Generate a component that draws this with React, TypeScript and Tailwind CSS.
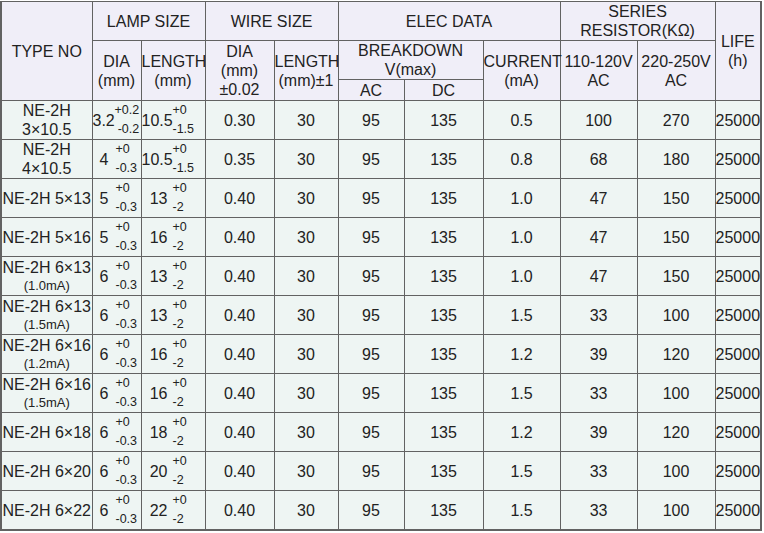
import React from 'react'

type Row = {
  name: string
  note?: string
  twoLine?: boolean
  dia: string
  diaTol: [string, string]
  len: string
  lenTol: [string, string]
  wire: string
  cur: string
  r1: string
  r2: string
}

const ROWS: Row[] = [
  { name: 'NE-2H', note: '3×10.5', twoLine: true, dia: '3.2', diaTol: ['+0.2', '-0.2'], len: '10.5', lenTol: ['+0', '-1.5'], wire: '0.30', cur: '0.5', r1: '100', r2: '270' },
  { name: 'NE-2H', note: '4×10.5', twoLine: true, dia: '4', diaTol: ['+0', '-0.3'], len: '10.5', lenTol: ['+0', '-1.5'], wire: '0.35', cur: '0.8', r1: '68', r2: '180' },
  { name: 'NE-2H 5×13', dia: '5', diaTol: ['+0', '-0.3'], len: '13', lenTol: ['+0', '-2'], wire: '0.40', cur: '1.0', r1: '47', r2: '150' },
  { name: 'NE-2H 5×16', dia: '5', diaTol: ['+0', '-0.3'], len: '16', lenTol: ['+0', '-2'], wire: '0.40', cur: '1.0', r1: '47', r2: '150' },
  { name: 'NE-2H 6×13', note: '(1.0mA)', dia: '6', diaTol: ['+0', '-0.3'], len: '13', lenTol: ['+0', '-2'], wire: '0.40', cur: '1.0', r1: '47', r2: '150' },
  { name: 'NE-2H 6×13', note: '(1.5mA)', dia: '6', diaTol: ['+0', '-0.3'], len: '13', lenTol: ['+0', '-2'], wire: '0.40', cur: '1.5', r1: '33', r2: '100' },
  { name: 'NE-2H 6×16', note: '(1.2mA)', dia: '6', diaTol: ['+0', '-0.3'], len: '16', lenTol: ['+0', '-2'], wire: '0.40', cur: '1.2', r1: '39', r2: '120' },
  { name: 'NE-2H 6×16', note: '(1.5mA)', dia: '6', diaTol: ['+0', '-0.3'], len: '16', lenTol: ['+0', '-2'], wire: '0.40', cur: '1.5', r1: '33', r2: '100' },
  { name: 'NE-2H 6×18', dia: '6', diaTol: ['+0', '-0.3'], len: '18', lenTol: ['+0', '-2'], wire: '0.40', cur: '1.2', r1: '39', r2: '120' },
  { name: 'NE-2H 6×20', dia: '6', diaTol: ['+0', '-0.3'], len: '20', lenTol: ['+0', '-2'], wire: '0.40', cur: '1.5', r1: '33', r2: '100' },
  { name: 'NE-2H 6×22', dia: '6', diaTol: ['+0', '-0.3'], len: '22', lenTol: ['+0', '-2'], wire: '0.40', cur: '1.5', r1: '33', r2: '100' },
]

const th = 'border border-[#626262] bg-[#f0eef8] p-0 font-normal text-center align-middle whitespace-nowrap'
const td = 'border border-[#626262] bg-[#eef5f3] p-0 text-center align-middle whitespace-nowrap'

// value with stacked +/- tolerance
function Tol({ main, tol, mainW, gap, right }: { main: string; tol: [string, string]; mainW: string; gap: string; right?: boolean }) {
  return (
    <div className="flex items-center">
      <span className={`${mainW} shrink-0 text-right`}>{main}</span>
      <span className={`flex flex-col ${right ? 'items-end' : 'items-start'} text-[12.5px] leading-[19px] ${gap}`}>
        <span>{tol[0]}</span>
        <span>{tol[1]}</span>
      </span>
    </div>
  )
}

export default function App() {
  return (
    <div className="w-[764px] h-[533px] bg-white pt-px">
      <table className="w-[761px] table-fixed border-collapse border-x-2 border-b-2 border-[#626262] text-[16px] leading-[19px] text-[#222] font-['Liberation_Sans',Arial,sans-serif]">
        <colgroup>
          <col className="w-[91px]" />
          <col className="w-[49px]" />
          <col className="w-[64px]" />
          <col className="w-[69px]" />
          <col className="w-[64px]" />
          <col className="w-[66px]" />
          <col className="w-[79px]" />
          <col className="w-[77px]" />
          <col className="w-[77px]" />
          <col className="w-[78px]" />
          <col className="w-[46px]" />
        </colgroup>
        <thead>
          <tr className="h-[39px]">
            <th rowSpan={3} className={th}>TYPE NO</th>
            <th colSpan={2} className={th}>LAMP SIZE</th>
            <th colSpan={2} className={th}>WIRE SIZE</th>
            <th colSpan={3} className={th}>ELEC DATA</th>
            <th colSpan={2} className={th}>SERIES<br />RESISTOR(KΩ)</th>
            <th rowSpan={3} className={th}>LIFE<br />(h)</th>
          </tr>
          <tr className="h-[39px]">
            <th rowSpan={2} className={th}>DIA<br />(mm)</th>
            <th rowSpan={2} className={th}>LENGTH<br />(mm)</th>
            <th rowSpan={2} className={th}>DIA<br />(mm)<br />±0.02</th>
            <th rowSpan={2} className={th}>LENGTH<br />(mm)±1</th>
            <th colSpan={2} className={th}>BREAKDOWN<br />V(max)</th>
            <th rowSpan={2} className={th}>CURRENT<br />(mA)</th>
            <th rowSpan={2} className={th}>110-120V<br />AC</th>
            <th rowSpan={2} className={th}>220-250V<br />AC</th>
          </tr>
          <tr className="h-[21px]">
            <th className={th}>AC</th>
            <th className={th}>DC</th>
          </tr>
        </thead>
        <tbody>
          {ROWS.map((r, i) => (
            <tr key={i} className="h-[39px]">
              <td className={td}>
                {r.twoLine ? (
                  <>{r.name}<br />{r.note}</>
                ) : r.note ? (
                  <div className="flex flex-col items-center">
                    <span>{r.name}</span>
                    <span className="text-[13px] leading-[17px]">{r.note}</span>
                  </div>
                ) : (
                  r.name
                )}
              </td>
              <td className={td}>
                {i === 0 ? (
                  <Tol main={r.dia} tol={r.diaTol} mainW="w-[22px]" gap="ml-0" right />
                ) : (
                  <Tol main={r.dia} tol={r.diaTol} mainW="w-[16px]" gap="ml-[7px]" />
                )}
              </td>
              <td className={td}>
                {r.twoLine ? (
                  <Tol main={r.len} tol={r.lenTol} mainW="w-[31px]" gap="ml-0" />
                ) : (
                  <Tol main={r.len} tol={r.lenTol} mainW="w-[26px]" gap="ml-[5px]" />
                )}
              </td>
              <td className={td}>{r.wire}</td>
              <td className={td}>30</td>
              <td className={td}>95</td>
              <td className={td}>135</td>
              <td className={td}>{r.cur}</td>
              <td className={td}>{r.r1}</td>
              <td className={td}>{r.r2}</td>
              <td className={td}>25000</td>
            </tr>
          ))}
        </tbody>
      </table>
    </div>
  )
}
